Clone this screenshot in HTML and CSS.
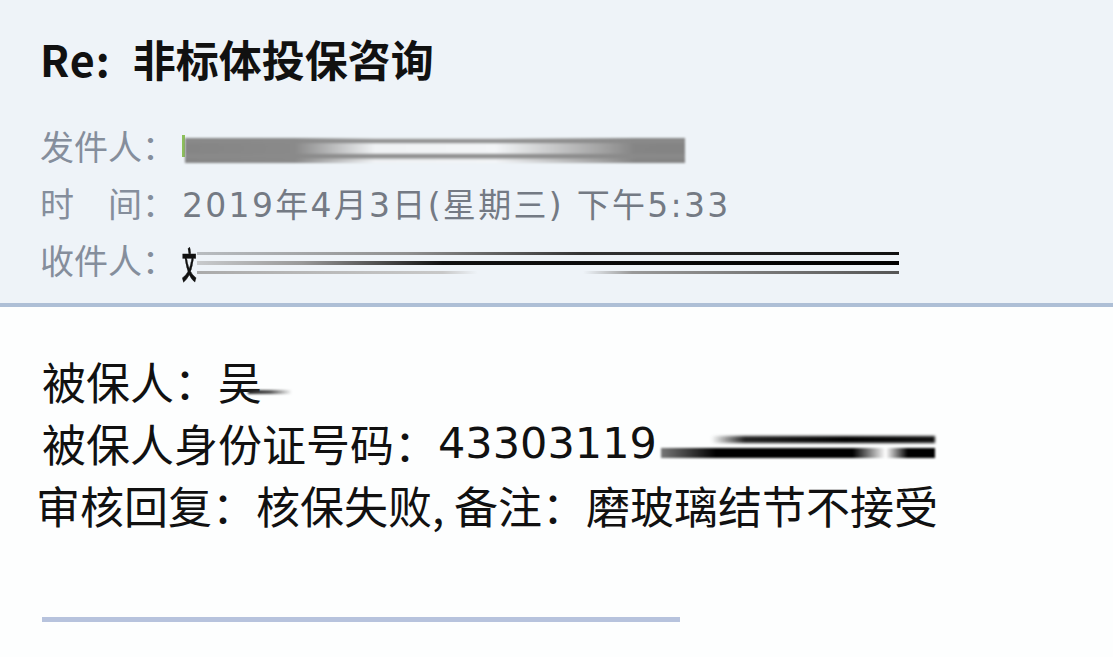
FILE: index.html
```html
<!DOCTYPE html>
<html lang="zh-CN">
<head>
<meta charset="utf-8">
<link rel="stylesheet" href="styles.css">
</head>
<body>
<div class="header">
  <h1 class="title"><span class="re">Re:</span>非标体投保咨询</h1>
  <div class="meta">
    <div class="row"><span class="label">发件人：</span><span class="tick"></span><span class="redact sender"></span></div>
    <div class="row"><span class="label">时&emsp;间：</span><span class="value">2019年4月3日(星期三) 下午5:33</span></div>
    <div class="row"><span class="label">收件人：</span><span class="squash">文</span><span class="redact recip"><i class="l1"></i><i class="l2"></i><i class="l3"></i></span></div>
  </div>
</div>
<div class="content">
  <p class="line">被保人：吴<span class="redact r-name"></span></p>
  <p class="line">被保人身份证号码：<span class="num">43303119</span><span class="redact r-id"><i class="a"></i><i class="b"></i></span></p>
  <p class="line first">审核回复：核保失败, 备注：磨玻璃结节不接受</p>
  <div class="rule"></div>
</div>
</body>
</html>
```
FILE: styles.css
```css
html, body { margin: 0; padding: 0; background: #fdfefe; }
body { font-family: "Noto Sans CJK SC", "Noto Sans", sans-serif; width: 1113px; height: 657px; overflow: hidden; }

.header {
  background: #eef3f8;
  border-bottom: 4px solid #aebfd6;
  height: 307px;
  box-sizing: border-box;
  padding: 28px 0 0 40px;
}
.title {
  margin: 0;
  font-size: 43px;
  line-height: 60px;
  font-weight: 700;
  color: #111;
}
.re { margin-right: 22px; letter-spacing: 1px; }
.meta { margin-top: 29px; }
.row {
  display: flex;
  align-items: center;
  height: 57px;
  font-size: 34px;
  white-space: nowrap;
}
.label { color: #858e9c; width: 142px; letter-spacing: 0; }
.value { color: #747a84; font-family: "DejaVu Sans", "Noto Sans CJK SC", sans-serif; font-size: 33px; letter-spacing: 2.3px; }
.tick { width: 3px; height: 22px; background: #8cc05a; }
.sender {
  width: 500px; height: 25px;
  background:
    linear-gradient(to bottom, transparent 0, #8a8a8a 2px, #8a8a8a 4px, transparent 6px, transparent 15px, #8a8a8a 17px, #8a8a8a 19px, transparent 22px),
    linear-gradient(to right, #858585 0, #8a8a8a 22%, #f0f2f4 38%, #f3f5f7 62%, #a0a0a0 84%, #858585 90%, #848484 100%);
  filter: blur(1px);
  margin-top: 10px;
}
.squash {
  display: inline-block;
  font-size: 36px;
  font-weight: 700;
  color: #111;
  transform: scaleX(0.4);
  transform-origin: left center;
  margin-right: -21px;
  margin-top: 6px;
  -webkit-text-stroke: 0.6px #111;
}
.recip { display: flex; flex-direction: column; width: 702px; margin-top: 6px; }
.recip i { display: block; }
.recip .l1 { height: 3px; background: linear-gradient(to right, #b8bcc0, #909090 30%, #333 55%, #111); }
.recip .l2 { height: 4px; margin-top: 6px; background: linear-gradient(to right, #c8cacc, #999 15%, #111 35%, #000); }
.recip .l3 { height: 3px; margin-top: 6px; background: linear-gradient(to right, #aaa, #c8c8c8 35%, transparent 40%, transparent 55%, #999 62%, #555); }
.redact { display: inline-block; }

.content { padding: 43px 0 0 42px; }
.line {
  margin: 0;
  font-size: 44px;
  line-height: 62px;
  color: #111;
  white-space: nowrap;
  display: flex;
  align-items: center;
}
.num { font-family: "DejaVu Sans", "Noto Sans CJK SC", sans-serif; font-size: 43px; }
.line.first { margin-left: -6px; }
.r-name {
  width: 44px; height: 4px;
  margin-left: -14px; margin-top: 22px;
  background: linear-gradient(to right, #222, #555 50%, transparent);
  filter: blur(1px);
}
.r-id { width: 274px; display: flex; flex-direction: column; gap: 5px; margin-left: 4px; margin-top: 8px; }
.r-id i { display: block; }
.r-id .a { height: 7px; margin-left: 50px; background: linear-gradient(to right, transparent, #222 15%, #000 60%, #111); filter: blur(1.5px); }
.r-id .b { height: 10px; background: linear-gradient(to right, #777, #000 20%, #000 70%, #fff 82%, #000 90%, #000); filter: blur(1px); }
.rule {
  width: 638px; height: 5px;
  background: #b7c3dd;
  margin-top: 81px;
}
```
